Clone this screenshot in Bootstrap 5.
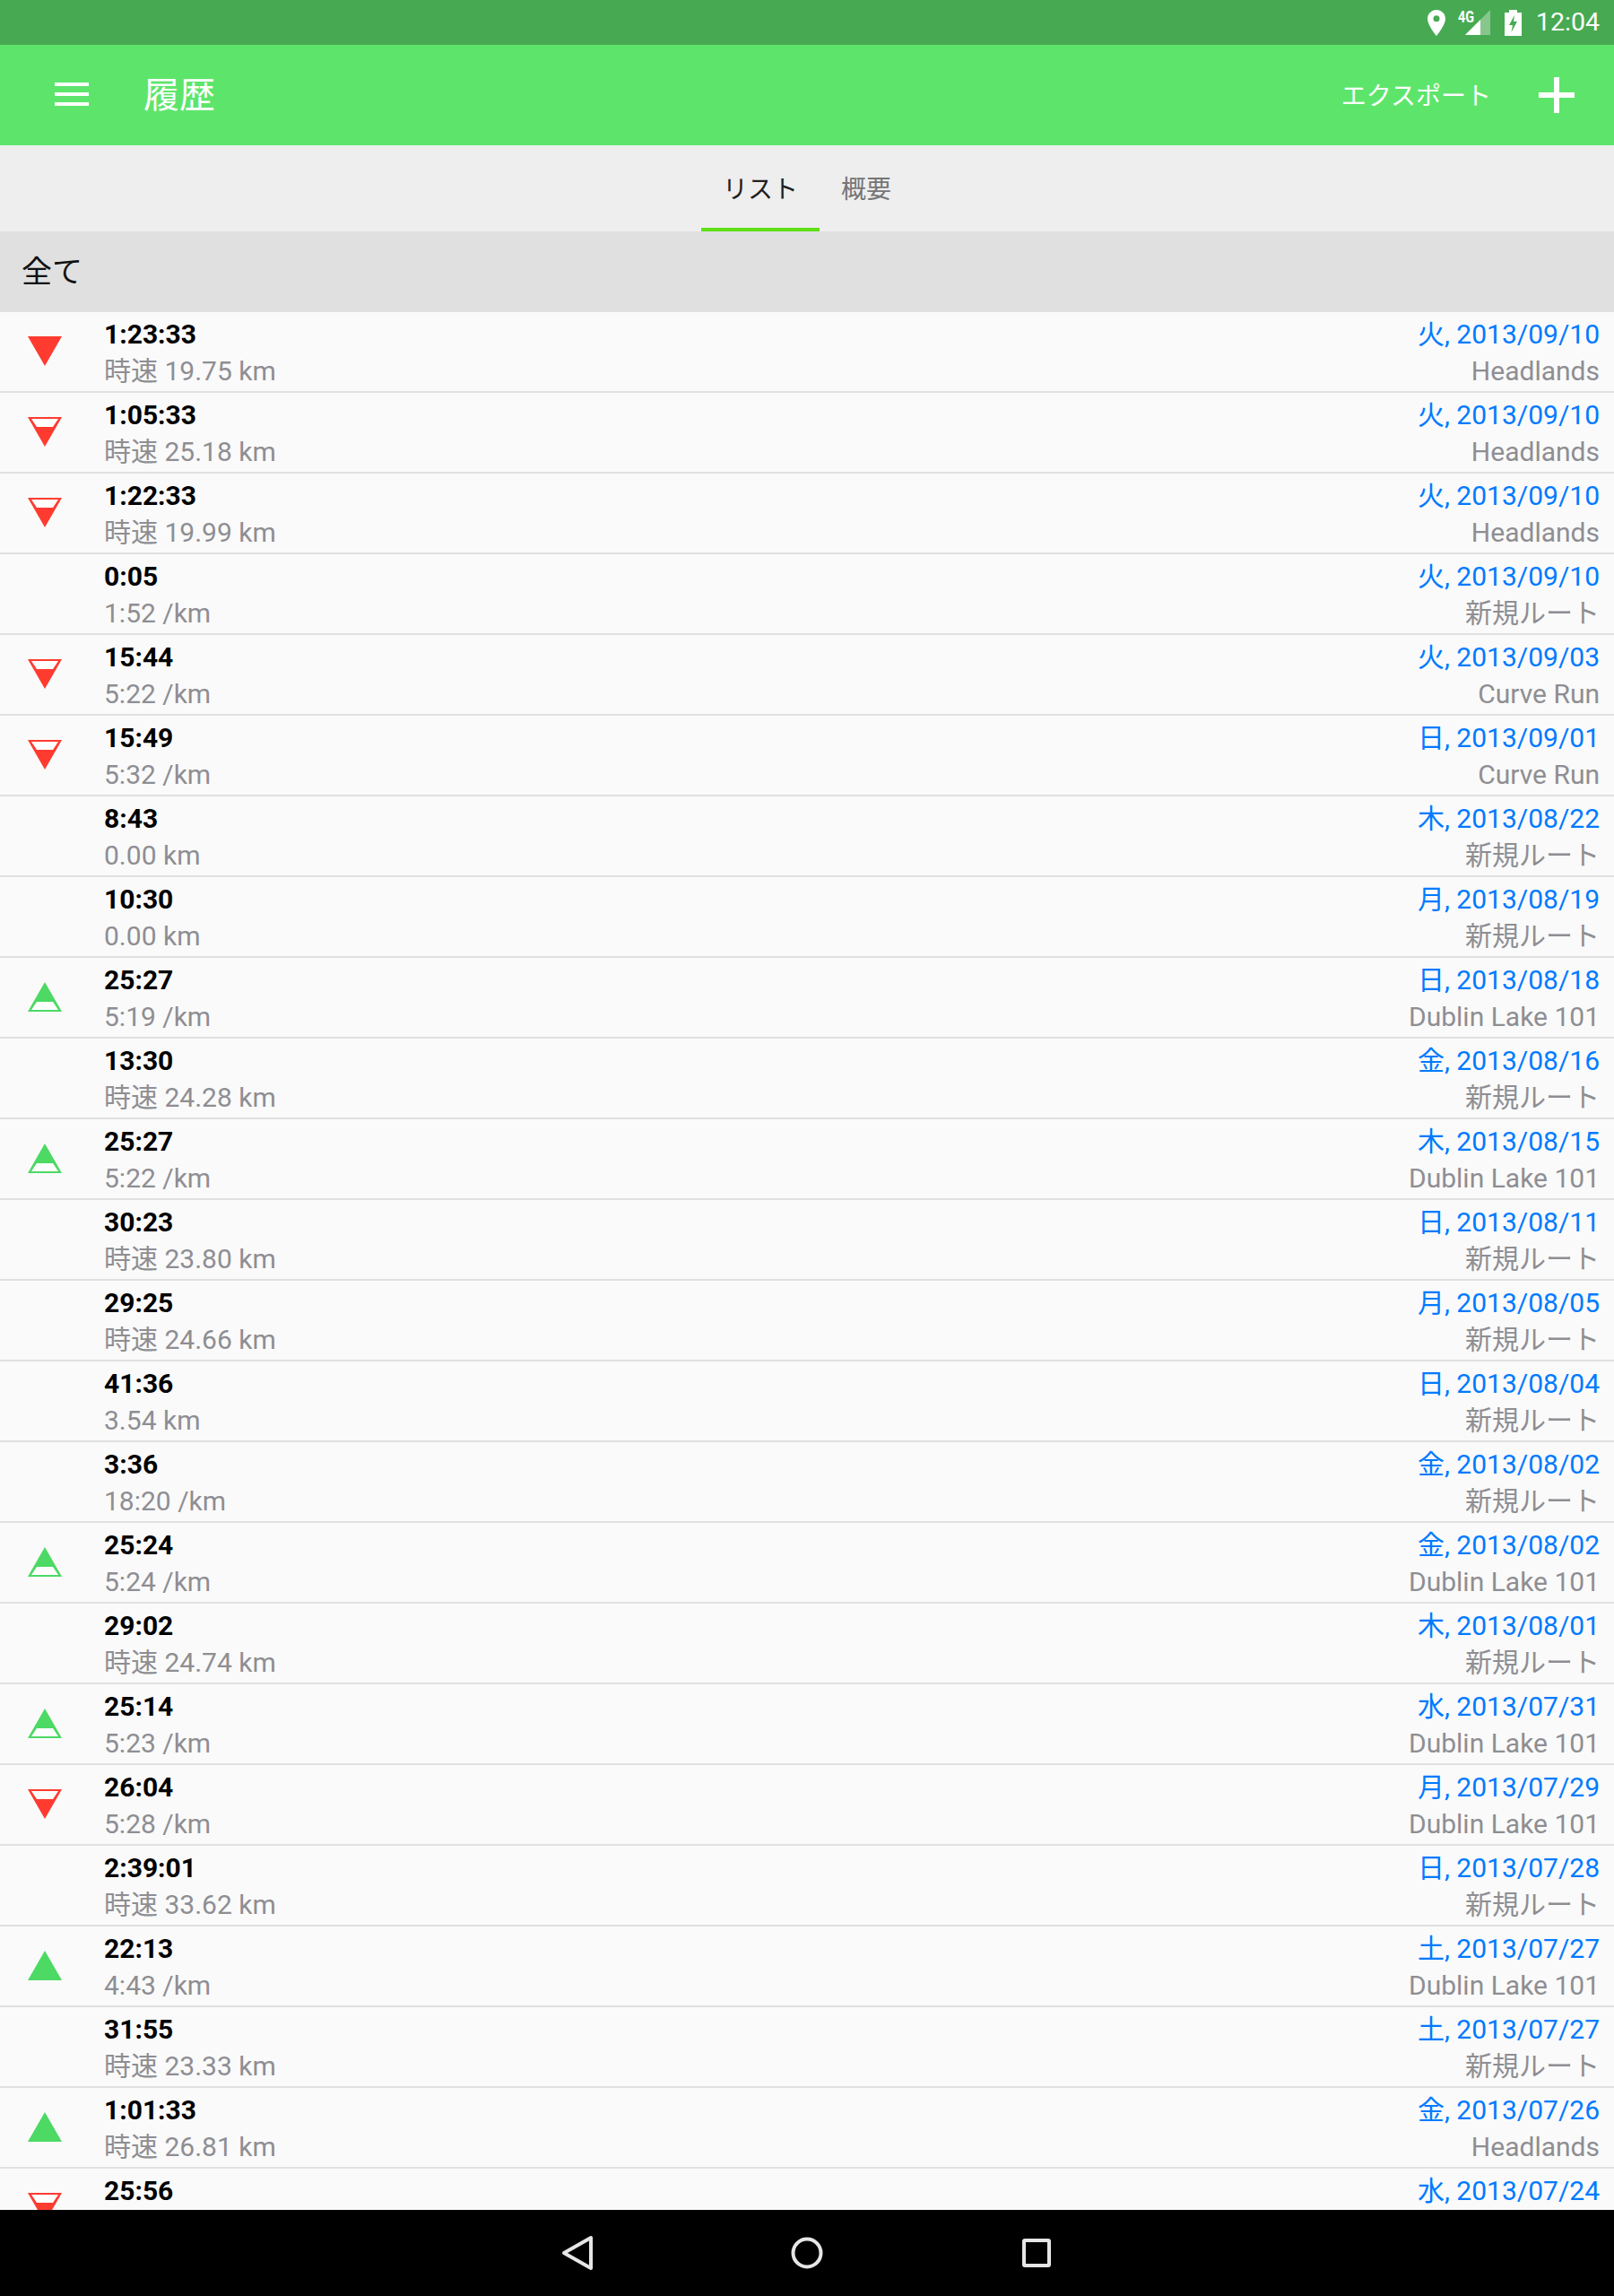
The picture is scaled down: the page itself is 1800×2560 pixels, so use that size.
<!DOCTYPE html>
<html lang="ja">
<head>
<meta charset="utf-8">
<title>履歴</title>
<link href="https://cdn.jsdelivr.net/npm/bootstrap@5.3.0/dist/css/bootstrap.min.css" rel="stylesheet">
<style>
html,body{margin:0;background:#fafafa}
body{font-family:Roboto,"Noto Sans CJK JP",sans-serif}
.phone{width:1800px;height:2560px;overflow:hidden}
.stat{height:50px;background:#47aa52;color:#fff;padding-right:16px;font-size:28.5px;line-height:50px}
.fourg{font-family:"Roboto";font-weight:700;font-size:18px;line-height:18px;transform:scaleX(.8);transform-origin:left top;position:absolute;left:0;top:10px}
.sigwrap{position:relative;width:36px;height:50px;margin-left:14px;margin-right:16px}
.sigwrap svg{position:absolute;left:8px;top:11px}
.tool{height:112px;background:#5de56b;color:#fff}
.burger{margin-left:61px;margin-right:61px;margin-bottom:2px;width:38px}
.ttl{font-size:40px;font-weight:400;line-height:1;padding-top:2px}
.exp{font-size:28px;margin-right:53px;padding-top:3px}
.plus{margin-right:44px}
.tabsbar{height:96px;background:#eee}
.tabb{height:96px;padding:6px 24px 0;font-size:28px;line-height:87px;color:#757575;border-bottom:4px solid transparent}
.tabb.on{color:#212121;border-bottom-color:#5fdf14}
.grp{height:90px;background:#e0e0e0;padding-left:24px;font-size:34px;line-height:90px;color:#111}
.lst{background:#fafafa;overflow:hidden}
.rw{height:90px;border-bottom:2px solid #e0e0e0;padding-right:16px}
.ic{width:116px;flex:none;padding:27px 0 0 31px}
.ic svg{display:block}
.tm{font-size:30px;font-weight:700;line-height:40px;color:#000;padding-top:5px}
.sb{font-size:30px;line-height:41px;color:#8e8e93}
.dt{font-size:30px;line-height:40px;color:#007aff;padding-top:5px}
.bot{height:96px;background:#000;gap:208px}
</style>
</head>
<body>
<svg width="0" height="0" class="position-absolute">
<defs>
<symbol id="df" viewBox="0 0 38 33"><path d="M0 0H38L19 33Z" fill="#ff3b30"/></symbol>
<symbol id="dh" viewBox="0 0 38 33"><path d="M0 0H38L19 33Z" fill="#ff3b30"/><path d="M4 2H34L28 11H10Z" fill="#fff"/></symbol>
<symbol id="uf" viewBox="0 0 38 33"><path d="M0 33H38L19 0Z" fill="#4cd964"/></symbol>
<symbol id="uh" viewBox="0 0 38 33"><path d="M0 33H38L19 0Z" fill="#4cd964"/><path d="M4 31H34L28 22H10Z" fill="#fff"/></symbol>
</defs>
</svg>
<div class="phone d-flex flex-column">
<div class="stat d-flex justify-content-end align-items-center flex-shrink-0">
<svg width="20" height="29" viewBox="0 0 20 29"><path fill="#fff" fill-rule="evenodd" d="M10 0C4.5 0 0 4.4 0 9.9 0 16.800 10 29 10 29S20 16.800 20 9.900C20 4.400 15.500 0 10 0ZM10 13.200A3.500 3.500 0 1 1 10 6.200 3.500 3.500 0 0 1 10 13.200Z"/></svg>
<div class="sigwrap"><span class="fourg">4G</span>
<svg width="28" height="28" viewBox="0 0 28 28"><path d="M0 28L28 0V28Z" fill="#fff" fill-opacity=".35"/><path d="M0 28L17 11V28Z" fill="#fff"/></svg></div>
<svg width="19" height="29" viewBox="0 0 19 29" class="me-3"><path fill="#fff" fill-rule="evenodd" d="M5 0H14V3H19V29H0V3H5ZM11 6L5 17H9L7.500 25 14 13H10Z"/></svg>
<span>12:04</span>
</div>
<div class="tool d-flex align-items-center flex-shrink-0">
<svg class="burger" width="38" height="26" viewBox="0 0 38 26"><path d="M0 0H38V4H0ZM0 11H38V15H0ZM0 22H38V26H0Z" fill="#fff"/></svg>
<div class="ttl flex-grow-1">履歴</div>
<div class="exp">エクスポート</div>
<svg class="plus" width="40" height="40" viewBox="0 0 40 40"><path d="M17 0H23V17H40V23H23V40H17V23H0V17H17Z" fill="#fff"/></svg>
</div>
<div class="tabsbar d-flex justify-content-center flex-shrink-0">
<div class="tabb on">リスト</div>
<div class="tabb">概要</div>
</div>
<div class="grp flex-shrink-0">全て</div>
<div class="lst flex-grow-1">
<div class="rw d-flex"><div class="ic"><svg width="38" height="33"><use href="#df"/></svg></div><div class="flex-grow-1"><div class="tm">1:23:33</div><div class="sb">時速 19.75 km</div></div><div class="text-end"><div class="dt">火, 2013/09/10</div><div class="sb">Headlands</div></div></div>
<div class="rw d-flex"><div class="ic"><svg width="38" height="33"><use href="#dh"/></svg></div><div class="flex-grow-1"><div class="tm">1:05:33</div><div class="sb">時速 25.18 km</div></div><div class="text-end"><div class="dt">火, 2013/09/10</div><div class="sb">Headlands</div></div></div>
<div class="rw d-flex"><div class="ic"><svg width="38" height="33"><use href="#dh"/></svg></div><div class="flex-grow-1"><div class="tm">1:22:33</div><div class="sb">時速 19.99 km</div></div><div class="text-end"><div class="dt">火, 2013/09/10</div><div class="sb">Headlands</div></div></div>
<div class="rw d-flex"><div class="ic"></div><div class="flex-grow-1"><div class="tm">0:05</div><div class="sb">1:52 /km</div></div><div class="text-end"><div class="dt">火, 2013/09/10</div><div class="sb">新規ルート</div></div></div>
<div class="rw d-flex"><div class="ic"><svg width="38" height="33"><use href="#dh"/></svg></div><div class="flex-grow-1"><div class="tm">15:44</div><div class="sb">5:22 /km</div></div><div class="text-end"><div class="dt">火, 2013/09/03</div><div class="sb">Curve Run</div></div></div>
<div class="rw d-flex"><div class="ic"><svg width="38" height="33"><use href="#dh"/></svg></div><div class="flex-grow-1"><div class="tm">15:49</div><div class="sb">5:32 /km</div></div><div class="text-end"><div class="dt">日, 2013/09/01</div><div class="sb">Curve Run</div></div></div>
<div class="rw d-flex"><div class="ic"></div><div class="flex-grow-1"><div class="tm">8:43</div><div class="sb">0.00 km</div></div><div class="text-end"><div class="dt">木, 2013/08/22</div><div class="sb">新規ルート</div></div></div>
<div class="rw d-flex"><div class="ic"></div><div class="flex-grow-1"><div class="tm">10:30</div><div class="sb">0.00 km</div></div><div class="text-end"><div class="dt">月, 2013/08/19</div><div class="sb">新規ルート</div></div></div>
<div class="rw d-flex"><div class="ic"><svg width="38" height="33"><use href="#uh"/></svg></div><div class="flex-grow-1"><div class="tm">25:27</div><div class="sb">5:19 /km</div></div><div class="text-end"><div class="dt">日, 2013/08/18</div><div class="sb">Dublin Lake 101</div></div></div>
<div class="rw d-flex"><div class="ic"></div><div class="flex-grow-1"><div class="tm">13:30</div><div class="sb">時速 24.28 km</div></div><div class="text-end"><div class="dt">金, 2013/08/16</div><div class="sb">新規ルート</div></div></div>
<div class="rw d-flex"><div class="ic"><svg width="38" height="33"><use href="#uh"/></svg></div><div class="flex-grow-1"><div class="tm">25:27</div><div class="sb">5:22 /km</div></div><div class="text-end"><div class="dt">木, 2013/08/15</div><div class="sb">Dublin Lake 101</div></div></div>
<div class="rw d-flex"><div class="ic"></div><div class="flex-grow-1"><div class="tm">30:23</div><div class="sb">時速 23.80 km</div></div><div class="text-end"><div class="dt">日, 2013/08/11</div><div class="sb">新規ルート</div></div></div>
<div class="rw d-flex"><div class="ic"></div><div class="flex-grow-1"><div class="tm">29:25</div><div class="sb">時速 24.66 km</div></div><div class="text-end"><div class="dt">月, 2013/08/05</div><div class="sb">新規ルート</div></div></div>
<div class="rw d-flex"><div class="ic"></div><div class="flex-grow-1"><div class="tm">41:36</div><div class="sb">3.54 km</div></div><div class="text-end"><div class="dt">日, 2013/08/04</div><div class="sb">新規ルート</div></div></div>
<div class="rw d-flex"><div class="ic"></div><div class="flex-grow-1"><div class="tm">3:36</div><div class="sb">18:20 /km</div></div><div class="text-end"><div class="dt">金, 2013/08/02</div><div class="sb">新規ルート</div></div></div>
<div class="rw d-flex"><div class="ic"><svg width="38" height="33"><use href="#uh"/></svg></div><div class="flex-grow-1"><div class="tm">25:24</div><div class="sb">5:24 /km</div></div><div class="text-end"><div class="dt">金, 2013/08/02</div><div class="sb">Dublin Lake 101</div></div></div>
<div class="rw d-flex"><div class="ic"></div><div class="flex-grow-1"><div class="tm">29:02</div><div class="sb">時速 24.74 km</div></div><div class="text-end"><div class="dt">木, 2013/08/01</div><div class="sb">新規ルート</div></div></div>
<div class="rw d-flex"><div class="ic"><svg width="38" height="33"><use href="#uh"/></svg></div><div class="flex-grow-1"><div class="tm">25:14</div><div class="sb">5:23 /km</div></div><div class="text-end"><div class="dt">水, 2013/07/31</div><div class="sb">Dublin Lake 101</div></div></div>
<div class="rw d-flex"><div class="ic"><svg width="38" height="33"><use href="#dh"/></svg></div><div class="flex-grow-1"><div class="tm">26:04</div><div class="sb">5:28 /km</div></div><div class="text-end"><div class="dt">月, 2013/07/29</div><div class="sb">Dublin Lake 101</div></div></div>
<div class="rw d-flex"><div class="ic"></div><div class="flex-grow-1"><div class="tm">2:39:01</div><div class="sb">時速 33.62 km</div></div><div class="text-end"><div class="dt">日, 2013/07/28</div><div class="sb">新規ルート</div></div></div>
<div class="rw d-flex"><div class="ic"><svg width="38" height="33"><use href="#uf"/></svg></div><div class="flex-grow-1"><div class="tm">22:13</div><div class="sb">4:43 /km</div></div><div class="text-end"><div class="dt">土, 2013/07/27</div><div class="sb">Dublin Lake 101</div></div></div>
<div class="rw d-flex"><div class="ic"></div><div class="flex-grow-1"><div class="tm">31:55</div><div class="sb">時速 23.33 km</div></div><div class="text-end"><div class="dt">土, 2013/07/27</div><div class="sb">新規ルート</div></div></div>
<div class="rw d-flex"><div class="ic"><svg width="38" height="33"><use href="#uf"/></svg></div><div class="flex-grow-1"><div class="tm">1:01:33</div><div class="sb">時速 26.81 km</div></div><div class="text-end"><div class="dt">金, 2013/07/26</div><div class="sb">Headlands</div></div></div>
<div class="rw d-flex"><div class="ic"><svg width="38" height="33"><use href="#dh"/></svg></div><div class="flex-grow-1"><div class="tm">25:56</div></div><div class="text-end"><div class="dt">水, 2013/07/24</div></div></div>
</div>
<div class="bot d-flex justify-content-center align-items-center flex-shrink-0">
<svg width="48" height="48" viewBox="0 0 48 48"><path d="M39 7V41L9 24Z" fill="none" stroke="#e6e6e6" stroke-width="4" stroke-linejoin="round"/></svg>
<svg width="48" height="48" viewBox="0 0 48 48"><circle cx="24" cy="24" r="15.500" fill="none" stroke="#e6e6e6" stroke-width="4"/></svg>
<svg width="48" height="48" viewBox="0 0 48 48"><rect x="10" y="10" width="28" height="28" rx="1" fill="none" stroke="#e6e6e6" stroke-width="4"/></svg>
</div>
</div>
<script src="https://cdn.jsdelivr.net/npm/bootstrap@5.3.0/dist/js/bootstrap.bundle.min.js"></script>
</body>
</html>
